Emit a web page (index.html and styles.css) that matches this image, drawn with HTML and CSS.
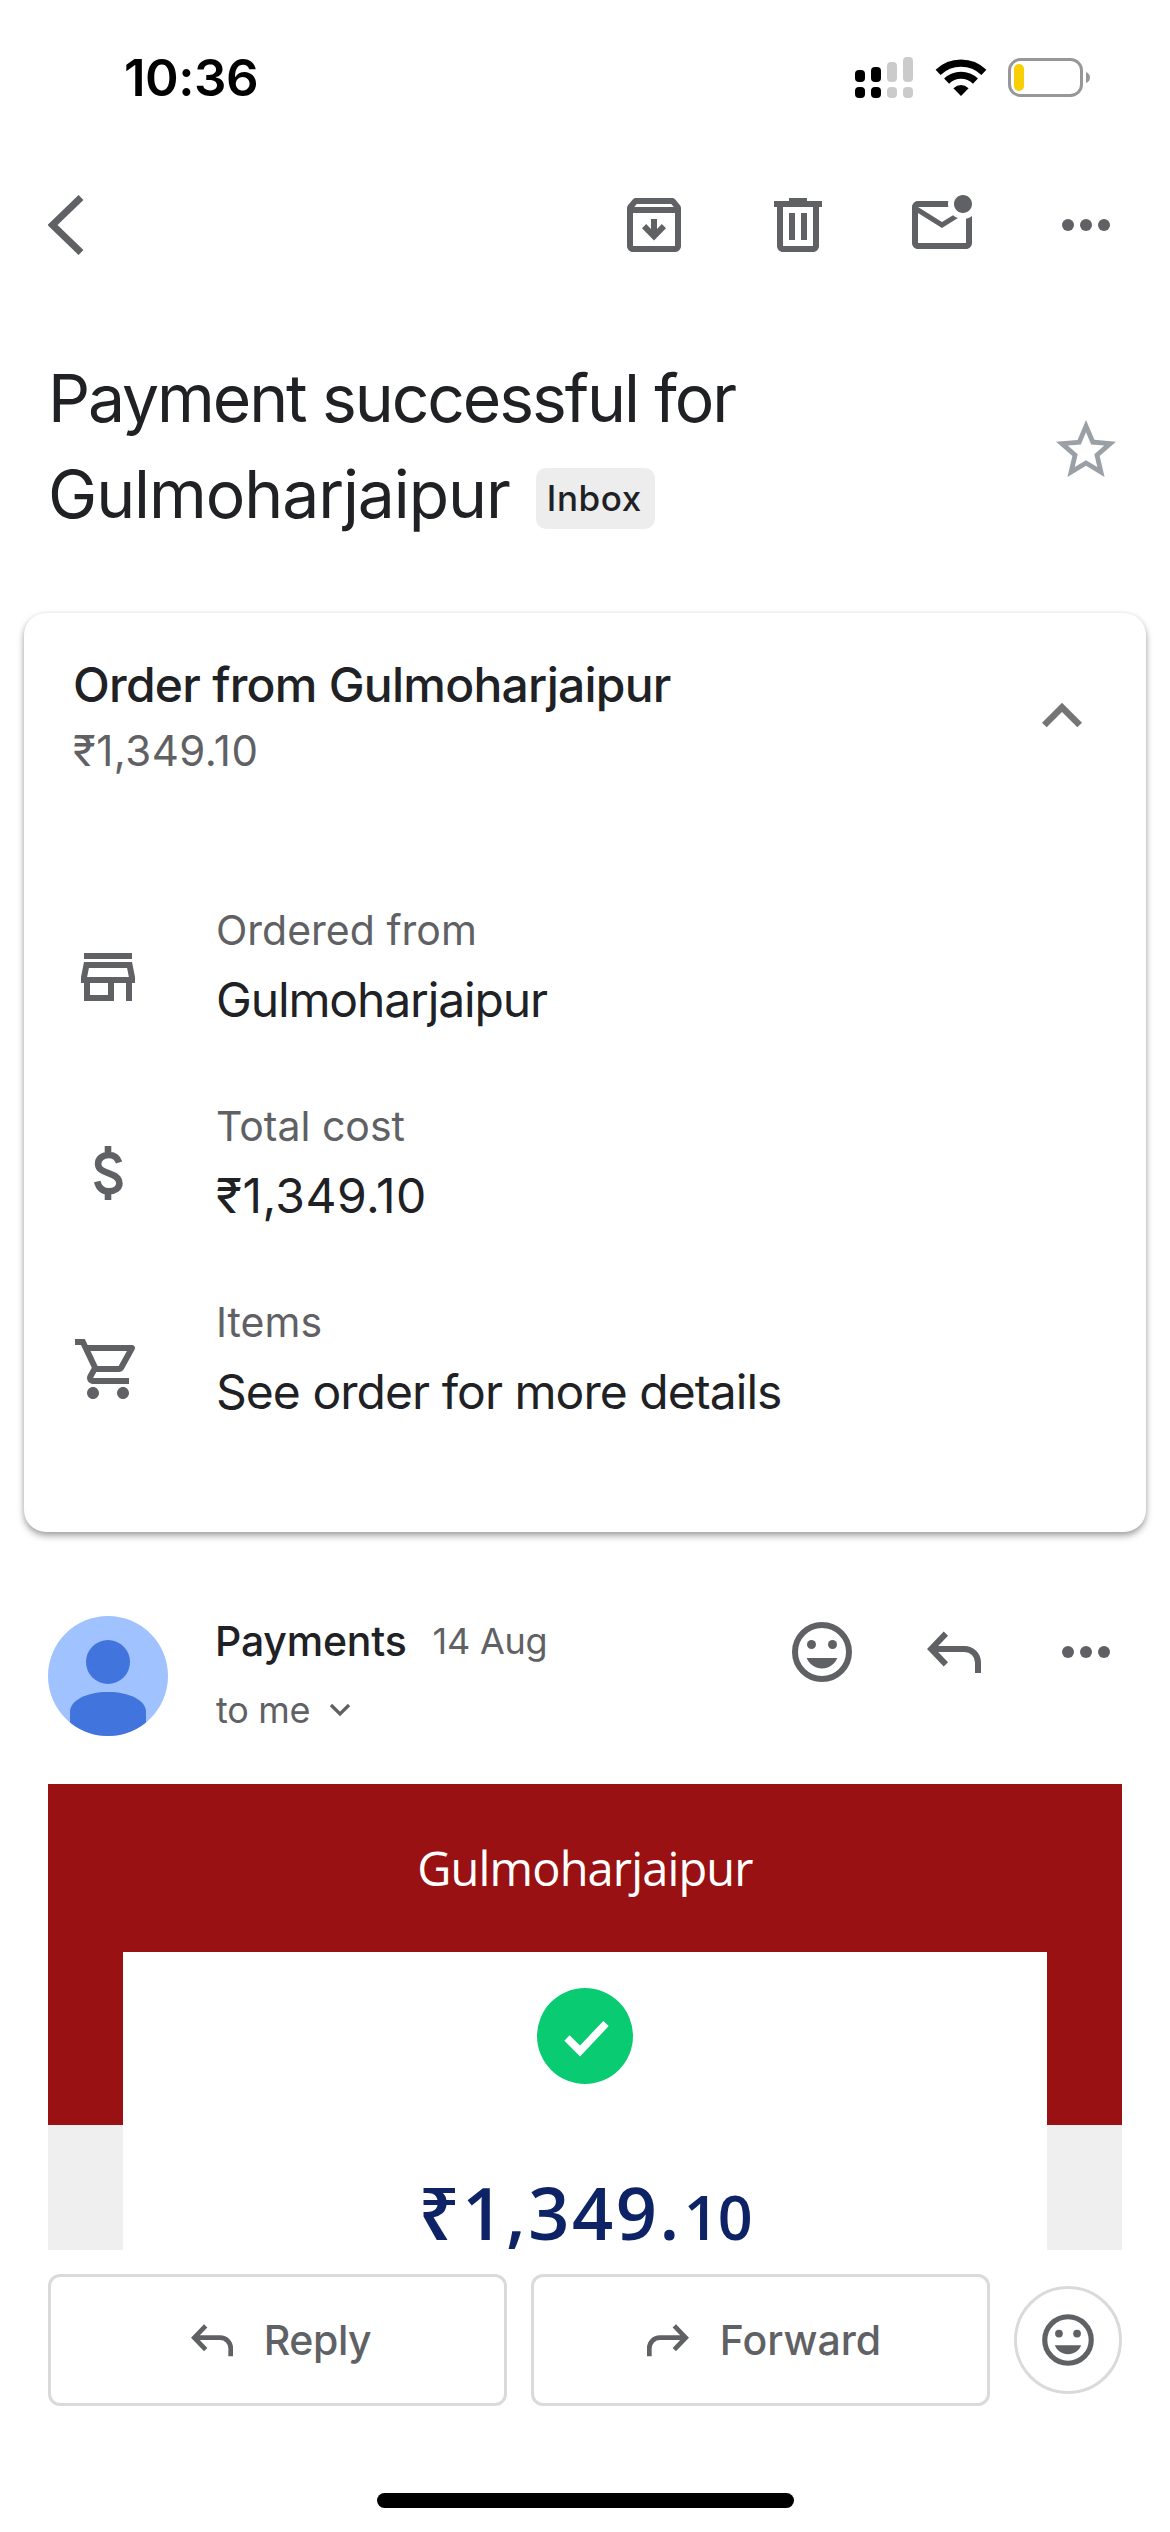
FILE: index.html
```
<!DOCTYPE html>
<html lang="en">
<head>
<meta charset="utf-8">
<title>Payment successful for Gulmoharjaipur</title>
<link rel="stylesheet" href="styles.css">
</head>
<body>
<svg class="defs" aria-hidden="true">
  <symbol id="dots" viewBox="0 0 24 24"><circle cx="6" cy="12" r="2"/><circle cx="12" cy="12" r="2"/><circle cx="18" cy="12" r="2"/></symbol>
  <symbol id="smile" viewBox="0 0 24 24"><circle cx="12" cy="12" r="9" fill="none" stroke="currentColor" stroke-width="2"/><circle cx="8.5" cy="9.5" r="1.5"/><circle cx="15.5" cy="9.5" r="1.5"/><path d="M6.9 14c.8 2.05 2.8 3.5 5.1 3.5s4.3-1.45 5.1-3.5z"/></symbol>
  <symbol id="reply" viewBox="0 0 24 24"><path d="M9.3 5.9 4.4 11l4.9 5.1M4.4 11H15.500a4.500 4.500 0 0 1 4.500 4.500V19" fill="none" stroke="currentColor" stroke-width="2"/></symbol>
</svg>

<header class="status">
  <time>10:36</time>
  <div class="status-icons">
    <svg width="52" height="42" viewBox="0 0 52 42">
      <rect y="13" width="10" height="12" rx="4"/><rect x="16" y="10" width="10" height="15" rx="4"/>
      <rect y="30" width="10" height="11" rx="4"/><rect x="16" y="30" width="10" height="11" rx="4"/>
      <g fill="#cbcbcb"><rect x="32" y="5" width="10" height="20" rx="4"/><rect x="48" y="0" width="10" height="25" rx="4"/><rect x="32" y="30" width="10" height="11" rx="4"/><rect x="48" y="30" width="10" height="11" rx="4"/></g>
    </svg>
    <svg class="wifi" width="50" height="37" viewBox="0 0 50 37"><g fill="none" stroke="#000"><path stroke-width="7.200" d="M2.100 13.300a33 33 0 0 1 45.800 0"/><path stroke-width="7.200" d="M10.600 22.100a20.700 20.700 0 0 1 28.800 0"/></g><path d="M25 37l-7.600-7.700q7.600-6.400 15.200 0z"/></svg>
    <svg class="battery" width="83" height="39" viewBox="0 0 83 39"><rect x="1.500" y="1.500" width="72" height="36" rx="11" fill="none" stroke="#979797" stroke-width="3"/><rect x="6" y="6" width="10" height="27" rx="5" fill="#f8ce05"/><path d="M78 14q4 1.500 4 5.500t-4 5.500z" fill="#979797"/></svg>
  </div>
</header>

<nav class="toolbar">
  <svg class="back" width="36" height="60" viewBox="0 0 36 60"><path d="M33 2.500 4.500 30 33 57.500" fill="none" stroke="currentColor" stroke-width="7"/></svg>
  <svg class="icon" viewBox="0 0 24 24"><path fill-rule="evenodd" d="M20.540 5.230l-1.390-1.680C18.880 3.210 18.470 3 18 3H6c-.47 0-.88.21-1.160.55L3.460 5.230C3.170 5.570 3 6.020 3 6.500V19c0 1.100.9 2 2 2h14c1.100 0 2-.9 2-2V6.500c0-.48-.17-.93-.46-1.270zM6.240 5h11.520l.83 1H5.420l.82-1zM5 19V8h14v11H5z"/><path d="M11 10h2v3.300l1.600-1.600L16 13.100l-4 4.100-4-4.100 1.400-1.400 1.600 1.600z"/></svg>
  <svg class="icon" viewBox="0 0 24 24"><path fill-rule="evenodd" d="M15 4V3H9v1H4v2h1v13c0 1.100.9 2 2 2h10c1.100 0 2-.9 2-2V6h1V4h-5zm2 15H7V6h10v13zM9 8h2v9H9zm4 0h2v9h-2z"/></svg>
  <svg class="icon" viewBox="0 0 24 24"><path d="M22 8.980V18c0 1.100-.9 2-2 2H4c-1.100 0-2-.9-2-2V6c0-1.100.9-2 2-2h10.100c-.06.32-.1.66-.1 1 0 .34.04.68.1 1H4l8 5 3.670-2.290c.47.43 1.020.76 1.630.98L12 13 4 8v10h16V9.900c.74-.15 1.420-.48 2-.92zM16 5c0 1.660 1.340 3 3 3s3-1.340 3-3-1.340-3-3-3-3 1.340-3 3z"/></svg>
  <svg class="icon"><use href="#dots"/></svg>
</nav>

<section class="subject">
  <h1><span class="line-one">Payment successful for</span><br><span class="line-two">Gulmoharjaipur</span><span class="chip">Inbox</span></h1>
  <svg class="icon star" viewBox="0 0 24 24"><path d="M22 9.240l-7.190-.62L12 2 9.190 8.630 2 9.240l5.460 4.730L5.820 21 12 17.270 18.180 21l-1.630-7.030L22 9.240zM12 15.400l-3.760 2.270 1-4.280-3.320-2.880 4.380-.38L12 6.100l1.710 4.040 4.380.38-3.320 2.880 1 4.280L12 15.400z"/></svg>
</section>

<section class="card">
  <div class="card-head">
    <div>
      <h2>Order from Gulmoharjaipur</h2>
      <p class="sub amount-sub">₹1,349.10</p>
    </div>
    <svg class="collapse" viewBox="0 0 24 24"><path d="M12 8l-6 6 1.410 1.410L12 10.830l4.590 4.580L18 14z"/></svg>
  </div>
  <div class="row">
    <svg class="icon" viewBox="0 0 24 24"><path d="M18.360 9l.6 3H5.040l.6-3h12.720M20 4H4v2h16V4zm0 3H4l-1 5v2h1v6h10v-6h4v6h2v-6h1v-2l-1-5zM6 18v-4h6v4H6z"/></svg>
    <div><p class="label">Ordered from</p><p class="value name">Gulmoharjaipur</p></div>
  </div>
  <div class="row">
    <svg class="icon" viewBox="0 0 24 24"><path d="M15.700 8.500C15.200 6.900 13.900 6 12.200 6 10.300 6 8.700 7.200 8.700 8.900c0 1.700 1.200 2.400 3.600 3.200 2.500.8 3.500 1.800 3.500 3.300 0 1.700-1.600 2.700-3.500 2.700-2 0-3.400-1.200-3.900-3.300M12 3v3M12 18v3" fill="none" stroke="currentColor" stroke-width="2.200"/></svg>
    <div><p class="label">Total cost</p><p class="value cost">₹1,349.10</p></div>
  </div>
  <div class="row">
    <svg class="icon" viewBox="0 0 24 24"><path d="M15.550 13c.75 0 1.410-.41 1.750-1.030l3.580-6.490c.37-.66-.11-1.480-.87-1.480H5.210l-.94-2H1v2h2l3.600 7.590-1.350 2.440C4.520 15.370 5.480 17 7 17h12v-2H7l1.100-2h7.450zM6.160 6h12.150l-2.760 5H8.530L6.160 6zM7 18c-1.100 0-1.990.9-1.990 2S5.900 22 7 22s2-.9 2-2-.9-2-2-2zm10 0c-1.100 0-1.990.9-1.990 2s.89 2 1.990 2 2-.9 2-2-.9-2-2-2z"/></svg>
    <div><p class="label">Items</p><p class="value details">See order for more details</p></div>
  </div>
</section>

<section class="sender">
  <svg class="avatar" viewBox="0 0 120 120"><clipPath id="round"><circle cx="60" cy="60" r="60"/></clipPath><g clip-path="url(#round)"><rect width="120" height="120" fill="#a0c2ff"/><circle cx="60" cy="46" r="22" fill="#4174dd"/><path d="M22 120V96c0-12 17-20 38-20s38 8 38 20v24z" fill="#4174dd"/></g></svg>
  <div class="who">
    <div class="from"><span class="from-name">Payments</span><span class="date">14 Aug</span></div>
    <div class="to">to me<svg width="22" height="14" viewBox="0 0 22 14"><path d="M2 2l9 9 9-9" fill="none" stroke="currentColor" stroke-width="3.200"/></svg></div>
  </div>
  <div class="actions">
    <svg class="icon"><use href="#smile"/></svg>
    <svg class="icon"><use href="#reply"/></svg>
    <svg class="icon"><use href="#dots"/></svg>
  </div>
</section>

<main class="mail">
  <div class="merchant">Gulmoharjaipur</div>
  <div class="receipt">
    <svg width="96" height="96" viewBox="0 0 96 96"><circle cx="48" cy="48" r="48" fill="#09cb72"/><path d="M30 50l13 13 26-27.500" fill="none" stroke="#fff" stroke-width="7.500"/></svg>
    <div class="total">₹1,349.<span class="paise">10</span></div>
  </div>
</main>

<footer>
  <div class="reply-bar">
    <button class="wide"><svg class="small-icon"><use href="#reply"/></svg><span class="reply-text">Reply</span></button>
    <button class="wide"><svg class="small-icon flip"><use href="#reply"/></svg><span class="forward-text">Forward</span></button>
    <button class="emoji"><svg class="emoji-icon"><use href="#smile"/></svg></button>
  </div>
  <div class="home-bar"></div>
</footer>
</body>
</html>
```
FILE: styles.css
```
* { box-sizing: border-box; margin: 0; padding: 0; }

body {
  width: 1170px;
  height: 2532px;
  overflow: hidden;
  background: #fff;
  color: #202124;
  font-family: Inter, "Liberation Sans", sans-serif;
}

svg { display: block; flex: none; }
.defs { position: absolute; width: 0; height: 0; }
.icon { width: 72px; height: 72px; color: #5f6164; fill: currentColor; }

.status {
  display: flex;
  justify-content: space-between;
  height: 155px;
  padding: 0 79px 0 124px;
}
.status time {
  font-size: 51px;
  font-weight: 600;
  line-height: 155px;
  letter-spacing: -0.5px;
  color: #000;
}
.status-icons { display: flex; align-items: flex-start; padding-top: 57px; }
.status-icons svg { overflow: visible; }
.wifi { margin: 2px 0 0 29px; }
.battery { margin: 1px 0 0 22px; }

.toolbar {
  display: flex;
  align-items: center;
  gap: 72px;
  height: 140px;
  padding: 0 48px;
  color: #5f6164;
}
.back { margin-right: auto; }

.subject {
  display: flex;
  justify-content: space-between;
  align-items: flex-start;
  height: 318px;
  padding: 55px 48px 0;
}
h1 { font-size: 66px; font-weight: 400; line-height: 96px; white-space: nowrap; }
.line-one { letter-spacing: -2.100px; }
.line-two { letter-spacing: -1.080px; }
.chip {
  display: inline-block;
  margin-left: 26px;
  padding: 0 13px 0 11px;
  border-radius: 10px;
  background: #ededed;
  font-size: 35px;
  font-weight: 500;
  line-height: 61px;
  letter-spacing: 0.600px;
  vertical-align: 7px;
}
.star { margin-top: 64px; color: #9aa0a6; }

.card {
  height: 919px;
  margin: 0 24px;
  padding: 42px 48px 0;
  border-radius: 22px;
  background: #fff;
  box-shadow: 0 4px 7px rgba(0, 0, 0, .32), 0 1px 5px rgba(0, 0, 0, .1);
}
.card-head { display: flex; justify-content: space-between; height: 250px; padding-left: 1px; }
h2 { font-size: 48px; font-weight: 500; line-height: 60px; letter-spacing: -0.750px; }
.sub { margin-top: 11px; font-size: 42px; line-height: 50px; color: #5f6164; }
.amount-sub { letter-spacing: 0.500px; }
.collapse { width: 80px; height: 80px; margin: 21px -4px 0 0; fill: #757575; }
.row { display: flex; gap: 72px; height: 196px; }
.row .icon { margin-top: 36px; }
.label { font-size: 41px; line-height: 50px; color: #5f6164; }
.value { margin-top: 15px; font-size: 48px; line-height: 60px; }
.name { letter-spacing: -1.140px; }
.cost { letter-spacing: 0.440px; }
.details { letter-spacing: -0.960px; }

.sender {
  display: flex;
  height: 252px;
  padding: 84px 48px 0;
}
.avatar { width: 120px; height: 120px; margin-right: 47px; }
.who { flex: 1; }
.from { display: flex; align-items: center; gap: 26px; line-height: 50px; }
.from-name { font-size: 41px; font-weight: 450; letter-spacing: -0.200px; }
.date { font-size: 36px; color: #5f6164; letter-spacing: -0.230px; }
.to {
  display: flex;
  align-items: center;
  gap: 19px;
  margin-top: 22px;
  padding-left: 1px;
  font-size: 36px;
  line-height: 44px;
  letter-spacing: -0.300px;
  color: #5f6164;
}
.actions { display: flex; gap: 60px; }

.mail {
  height: 466px;
  margin: 0 48px;
  overflow: hidden;
  background: linear-gradient(#991112 341px, #efefef 341px);
  text-align: center;
  font-family: "Open Sans", "Noto Sans", sans-serif;
}
.merchant {
  height: 168px;
  padding-top: 54px;
  font-size: 47px;
  line-height: 60px;
  letter-spacing: -0.860px;
  color: #fff;
}
.receipt {
  display: flex;
  flex-direction: column;
  align-items: center;
  height: 400px;
  margin: 0 75px;
  padding-top: 36px;
  background: #fff;
}
.total {
  margin-top: 83px;
  font-size: 72px;
  font-weight: 650;
  line-height: 90px;
  letter-spacing: 2.600px;
  color: #0d2366;
}
.paise { margin-left: 2px; font-size: 61px; letter-spacing: -1px; }

.reply-bar { display: flex; align-items: center; gap: 24px; padding: 24px 48px 0; }
button { display: flex; align-items: center; justify-content: center; border: 3px solid #dadada; background: #fff; color: #5f6164; fill: currentColor; font: 500 41px/50px Inter, sans-serif; }
.wide { flex: 1; height: 132px; border-radius: 12px; gap: 24px; }
.small-icon { width: 56px; height: 56px; }
.reply-text { letter-spacing: -0.400px; }
.flip { transform: scaleX(-1); }
.emoji { width: 108px; height: 108px; border-radius: 50%; }
.emoji-icon { width: 62px; height: 62px; }
.home-bar { width: 417px; height: 15px; margin: 87px auto 0; border-radius: 8px; background: #000; }
```
